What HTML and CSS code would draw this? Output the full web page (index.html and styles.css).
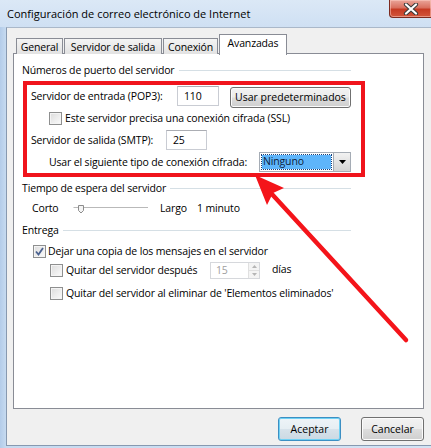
FILE: index.html
```html
<!DOCTYPE html>
<html lang="es">
<head>
<meta charset="utf-8">
<title>Configuración de correo electrónico de Internet</title>
<link rel="stylesheet" href="styles.css">
</head>
<body>
<div class="window">
  <div class="titlebar">
    <span class="title">Configuración de correo electrónico de Internet</span>
    <div class="close">
      <svg width="16" height="12" viewBox="0 0 16 12">
        <path d="M3 1.5 L13 10.5 M13 1.5 L3 10.5" stroke="#3a3a3a" stroke-width="4.2" stroke-linecap="round"/>
        <path d="M3 1.5 L13 10.5 M13 1.5 L3 10.5" stroke="#ffffff" stroke-width="2.2" stroke-linecap="round"/>
      </svg>
    </div>
  </div>

  <div class="client">
    <div class="tabs">
      <div class="tab w-general">General</div>
      <div class="tab w-salida">Servidor de salida</div>
      <div class="tab w-conexion">Conexión</div>
      <div class="tab active w-avanzadas">Avanzadas</div>
    </div>

    <div class="panel">
      <div class="group-head"><span>Números de puerto del servidor</span></div>

      <div class="highlight">
        <div class="row">
          <span class="lbl lbl-pop">Servidor de entrada (POP3):</span>
          <span class="field field-pop">110</span>
          <button class="btn btn-defaults">Usar predeterminados</button>
        </div>
        <div class="row indent">
          <span class="check"></span>
          <span class="check-text">Este servidor precisa una conexión cifrada (SSL)</span>
        </div>
        <div class="row">
          <span class="lbl lbl-smtp">Servidor de salida (SMTP):</span>
          <span class="field field-smtp">25</span>
        </div>
        <div class="row indent">
          <span class="lbl lbl-enc">Usar el siguiente tipo de conexión cifrada:</span>
          <span class="combo">
            <span class="combo-value"><span class="combo-sel">Ninguno</span></span>
            <span class="combo-arrow">
              <svg width="7" height="4" viewBox="0 0 7 4"><path d="M0 0 H7 L3.5 4 Z" fill="#000"/></svg>
            </span>
          </span>
        </div>
      </div>

      <div class="group-head gh-timeout"><span>Tiempo de espera del servidor</span></div>
      <div class="row timeout">
        <span class="lbl lbl-corto">Corto</span>
        <span class="slider">
          <svg width="76" height="12" viewBox="0 0 76 12">
            <path d="M0.5 5.5 H75" stroke="#b9b9b9" stroke-width="1"/>
            <path d="M0.5 6.5 H75" stroke="#ffffff" stroke-width="1"/>
            <path d="M5.5 3.5 H10.5 V8.5 L8 11 L5.5 8.5 Z" fill="#f4f4f4" stroke="#8c8c8c" stroke-width="1"/>
          </svg>
        </span>
        <span class="lbl lbl-largo">Largo</span>
        <span>1 minuto</span>
      </div>

      <div class="group-head gh-entrega"><span>Entrega</span></div>
      <div class="row opt opt-copy">
        <span class="check checked">
          <svg width="9" height="9" viewBox="0 0 9 9"><path d="M1 4.5 L3.5 7.5 L8 1" fill="none" stroke="#4b6290" stroke-width="1.8"/></svg>
        </span>
        <span class="check-text">Dejar una copia de los mensajes en el servidor</span>
      </div>
      <div class="row opt opt-sub">
        <span class="check"></span>
        <span class="check-text lbl-after">Quitar del servidor después</span>
        <span class="spin">
          <span class="spin-value">15</span>
          <span class="spin-btns">
            <span class="spin-btn"><svg width="5" height="3" viewBox="0 0 5 3"><path d="M0 3 L2.5 0 L5 3 Z" fill="#b5b5b5"/></svg></span>
            <span class="spin-btn"><svg width="5" height="3" viewBox="0 0 5 3"><path d="M0 0 L2.5 3 L5 0 Z" fill="#b5b5b5"/></svg></span>
          </span>
        </span>
        <span class="dias">días</span>
      </div>
      <div class="row opt opt-sub opt-last">
        <span class="check"></span>
        <span class="check-text">Quitar del servidor al eliminar de 'Elementos eliminados'</span>
      </div>
    </div>

    <div class="actions">
      <button class="btn btn-dialog btn-default">Aceptar</button>
      <button class="btn btn-dialog">Cancelar</button>
    </div>
  </div>

  <svg class="arrow" width="431" height="448" viewBox="0 0 431 448">
    <path d="M270 192 L406 340" stroke="#f4141a" stroke-width="4.5" stroke-linecap="round"/>
    <path d="M255 175 L284 188 L273 193 L267 205 Z" fill="#f4141a"/>
  </svg>
</div>
</body>
</html>
```

FILE: styles.css
```css
* { box-sizing: border-box; }

html, body {
  margin: 0;
  padding: 0;
  background: #c3d7ee;
}

body {
  font-family: "Open Sans", "Noto Sans", sans-serif;
  font-size: 10.5px;
  letter-spacing: -0.15px;
  color: #000;
}

.window {
  position: relative;
  width: 431px;
  height: 448px;
  overflow: hidden;
  background: linear-gradient(90deg, #b3cce9 0px, #c6daf0 6px, #d3e3f4 100%);
}

/* caption bar */
.titlebar {
  display: flex;
  align-items: flex-start;
  height: 27px;
  background: linear-gradient(#dbe8f6, #cfe0f3);
}

.title {
  padding: 6px 0 0 7px;
  font-size: 11px;
  letter-spacing: 0;
  color: #000;
  white-space: nowrap;
}

.close {
  margin-left: auto;
  width: 42px;
  height: 18px;
  display: flex;
  align-items: center;
  justify-content: center;
  border: 1px solid #7c2a1f;
  border-top: none;
  border-right: none;
  border-radius: 0 0 0 4px;
  background: linear-gradient(#eaa59a 0%, #d9705f 45%, #c63a23 55%, #d2563b 100%);
  box-shadow: inset 0 0 0 1px rgba(255, 210, 200, 0.5);
}

/* dialog body */
.client {
  margin-left: 6px;
  height: 419px;
  padding: 5px 7px 0 6px;
  background: #f0f0f0;
  border-top: 1px solid #aab8c9;
  border-left: 1px solid #8799b0;
  border-bottom: 1px solid #8799b0;
}

.tabs {
  display: flex;
  align-items: flex-end;
  height: 21px;
  padding-left: 3px;
  position: relative;
  z-index: 1;
}

.tab {
  height: 16px;
  padding-top: 1px;
  text-align: center;
  border: 1px solid #898c95;
  border-bottom: none;
  background: linear-gradient(#f4f4f4, #e2e2e2);
  white-space: nowrap;
  line-height: 14px;
}

.tab + .tab { margin-left: 1px; }

.tab.active {
  height: 21px;
  padding-top: 1px;
  background: #fff;
  margin-bottom: -1px;
  line-height: 15px;
}

.w-general { width: 47px; }
.w-salida { width: 98px; }
.w-conexion { width: 55px; }
.w-avanzadas { width: 68px; }

.panel {
  height: 356px;
  margin-top: -1px;
  border: 1px solid #898c95;
  background: #fff;
  padding-top: 8px;
}

/* group box headings with a rule to the right */
.group-head {
  display: flex;
  align-items: center;
  height: 16px;
  width: 329px;
  margin-left: 8px;
}

.group-head::after {
  content: "";
  flex: 1;
  height: 1px;
  margin-left: 4px;
  background: #d5dfe5;
}

.highlight {
  width: 342px;
  margin: 3px 0 0 9px;
  border: 4px solid #f0141c;
  padding-left: 4px;
}

.row {
  display: flex;
  align-items: center;
  height: 22px;
  white-space: nowrap;
}

.indent { padding-left: 18px; }

.lbl { display: inline-block; }
.lbl-pop { width: 146px; }
.lbl-smtp { width: 135px; }
.lbl-enc { width: 210px; }

.field {
  display: inline-block;
  height: 20px;
  line-height: 18px;
  padding-left: 6px;
  border: 1px solid #c9ccd3;
  border-top-color: #abadb3;
  background: #fff;
}

.field-pop { width: 42px; }
.field-smtp { width: 41px; }

.btn {
  font: inherit;
  color: #000;
  height: 21px;
  padding: 0;
  border: 1px solid #707070;
  border-radius: 3px;
  background: linear-gradient(#f2f2f2 0%, #ebebeb 49%, #dddddd 51%, #cfcfcf 100%);
  box-shadow: inset 0 0 0 1px #fbfbfb;
}

.btn-defaults {
  width: 121px;
  margin-left: 11px;
  margin-top: 2px;
}

.check {
  display: inline-flex;
  align-items: center;
  justify-content: center;
  width: 13px;
  height: 13px;
  flex: none;
  border: 1px solid #8e8f8f;
  background: linear-gradient(135deg, #dcdcdc, #fbfbfb);
  box-shadow: inset 0 0 0 1px #f4f4f4;
}

.check-text { margin-left: 3px; }

.combo {
  display: inline-flex;
  width: 92px;
  height: 20px;
  border: 1px solid #a5acb5;
  background: #fff;
}

.combo-value {
  flex: 1;
  padding: 2px;
}

.combo-sel {
  display: block;
  height: 14px;
  line-height: 13px;
  padding-left: 1px;
  background: #5eb5fa;
  outline: 1px dotted #1b3f77;
  color: #0d1c3a;
}

.combo-arrow {
  width: 17px;
  display: flex;
  align-items: center;
  justify-content: center;
  border-left: 1px solid #a5acb5;
  background: linear-gradient(#f2f2f2, #d4d4d4);
}

/* timeout row */
.timeout {
  height: 20px;
  margin-top: 2px;
  padding-left: 18px;
}

.lbl-corto { width: 41px; }
.slider { width: 87px; display: inline-flex; }
.lbl-largo { width: 37px; }

.gh-timeout { margin-top: 3px; }
.gh-entrega { margin-top: 4px; }

.opt { height: 20px; }
.opt-copy { margin-top: 3px; padding-left: 19px; }
.opt-copy .check-text { margin-left: 2px; }
.opt-sub { margin-top: -1px; padding-left: 36px; }
.opt-last { margin-top: 3px; }

.lbl-after { width: 144px; }

.spin {
  display: inline-flex;
  width: 50px;
  height: 17px;
  border: 1px solid #d6d8dc;
  background: #fff;
}

.spin-value {
  flex: 1;
  padding-left: 5px;
  line-height: 15px;
  color: #a0a0a0;
}

.spin-btns {
  width: 11px;
  display: flex;
  flex-direction: column;
  border-left: 1px solid #e0e0e0;
}

.spin-btn {
  flex: 1;
  display: flex;
  align-items: center;
  justify-content: center;
  background: #f4f4f4;
}

.spin-btn + .spin-btn { border-top: 1px solid #e0e0e0; }

.dias { margin-left: 12px; margin-top: -2px; }

/* dialog buttons */
.actions {
  display: flex;
  justify-content: flex-end;
  gap: 20px;
  margin-top: 8px;
}

.btn-dialog {
  width: 63px;
  height: 24px;
}

.btn-default {
  border-color: #3c8fc3;
  box-shadow: inset 0 0 0 1px #6fd1f4;
  background: linear-gradient(#eef4f8 0%, #e6eef3 49%, #d7e2ea 51%, #cbd9e3 100%);
}

.arrow {
  position: absolute;
  left: 0;
  top: 0;
  pointer-events: none;
}
```
